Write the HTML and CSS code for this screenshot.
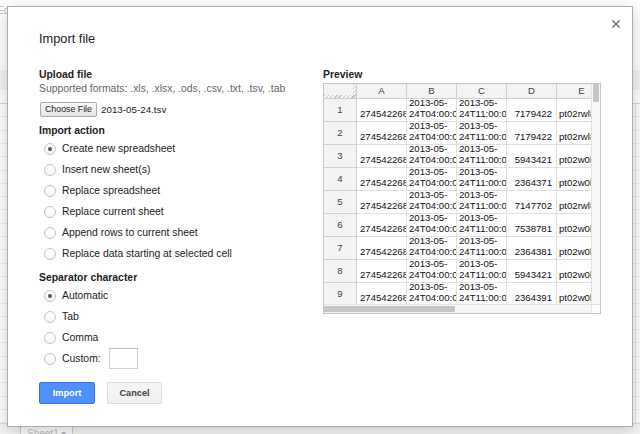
FILE: index.html
```html
<!DOCTYPE html>
<html lang="en">
<head>
    <meta charset="UTF-8"/>
    <meta content="width=device-width, initial-scale=1.0" name="viewport"/>
    <title>Import file</title>
    <link rel="stylesheet" href="styles.css">
</head>
<body>
    <div class="page">
        <!-- faded spreadsheet behind the modal -->
        <div class="sheet-menu">Edit</div>
        <div class="sheet-toolbar"></div>
        <div class="sheet-formula"></div>
        <div class="sheet-head"></div>
        <div class="sheet-grid"></div>
        <div class="sheet-tabs"><span class="sheet-tab">Sheet1 &#9662;</span></div>

        <div class="dialog">
            <button class="dialog-close" title="Close">
                <svg width="8" height="8" viewBox="0 0 8 8">
                    <path d="M0.5 0.5 L7.5 7.5 M7.5 0.5 L0.5 7.5" stroke="#7a7a7a" stroke-width="1.5" fill="none"/>
                </svg>
            </button>
            <h1 class="dialog-title">Import file</h1>

            <div class="dialog-body">
                <div class="col-left">
                    <div class="section-label">Upload file</div>
                    <div class="hint">Supported formats: .xls, .xlsx, .ods, .csv, .txt, .tsv, .tab</div>
                    <div class="file-row">
                        <span class="file-btn">Choose File</span>
                        <span class="file-name">2013-05-24.tsv</span>
                    </div>

                    <div class="section-label action-label">Import action</div>
                    <div class="radio-list">
                        <label class="radio-row"><span class="radio checked"></span>Create new spreadsheet</label>
                        <label class="radio-row"><span class="radio"></span>Insert new sheet(s)</label>
                        <label class="radio-row"><span class="radio"></span>Replace spreadsheet</label>
                        <label class="radio-row"><span class="radio"></span>Replace current sheet</label>
                        <label class="radio-row"><span class="radio"></span>Append rows to current sheet</label>
                        <label class="radio-row"><span class="radio"></span>Replace data starting at selected cell</label>
                    </div>

                    <div class="section-label sep-label">Separator character</div>
                    <div class="radio-list">
                        <label class="radio-row"><span class="radio checked"></span>Automatic</label>
                        <label class="radio-row"><span class="radio"></span>Tab</label>
                        <label class="radio-row"><span class="radio"></span>Comma</label>
                        <label class="radio-row"><span class="radio"></span>Custom:<span class="custom-input"></span></label>
                    </div>

                    <div class="buttons">
                        <button class="btn btn-primary">Import</button>
                        <button class="btn btn-cancel">Cancel</button>
                    </div>
                </div>

                <div class="col-right">
                    <div class="section-label">Preview</div>
                    <div class="preview">
                        <div class="preview-scroll">
                            <div class="sheet">
                                <div class="cell hd corner"></div>
                                <div class="cell hd">A</div>
                                <div class="cell hd">B</div>
                                <div class="cell hd">C</div>
                                <div class="cell hd">D</div>
                                <div class="cell hd">E</div>

                                <div class="cell hd">1</div>
                                <div class="cell ca"><span>2745422681</span></div>
                                <div class="cell"><span>2013-05-</span><span>24T04:00:00</span></div>
                                <div class="cell"><span>2013-05-</span><span>24T11:00:00</span></div>
                                <div class="cell cd"><span>7179422</span></div>
                                <div class="cell"><span>pt02rwl8</span></div>

                                <div class="cell hd">2</div>
                                <div class="cell ca"><span>2745422681</span></div>
                                <div class="cell"><span>2013-05-</span><span>24T04:00:00</span></div>
                                <div class="cell"><span>2013-05-</span><span>24T11:00:00</span></div>
                                <div class="cell cd"><span>7179422</span></div>
                                <div class="cell"><span>pt02rwl8</span></div>

                                <div class="cell hd">3</div>
                                <div class="cell ca"><span>2745422681</span></div>
                                <div class="cell"><span>2013-05-</span><span>24T04:00:00</span></div>
                                <div class="cell"><span>2013-05-</span><span>24T11:00:00</span></div>
                                <div class="cell cd"><span>5943421</span></div>
                                <div class="cell"><span>pt02w0l1</span></div>

                                <div class="cell hd">4</div>
                                <div class="cell ca"><span>2745422681</span></div>
                                <div class="cell"><span>2013-05-</span><span>24T04:00:00</span></div>
                                <div class="cell"><span>2013-05-</span><span>24T11:00:00</span></div>
                                <div class="cell cd"><span>2364371</span></div>
                                <div class="cell"><span>pt02w0l1</span></div>

                                <div class="cell hd">5</div>
                                <div class="cell ca"><span>2745422681</span></div>
                                <div class="cell"><span>2013-05-</span><span>24T04:00:00</span></div>
                                <div class="cell"><span>2013-05-</span><span>24T11:00:00</span></div>
                                <div class="cell cd"><span>7147702</span></div>
                                <div class="cell"><span>pt02rwl8</span></div>

                                <div class="cell hd">6</div>
                                <div class="cell ca"><span>2745422681</span></div>
                                <div class="cell"><span>2013-05-</span><span>24T04:00:00</span></div>
                                <div class="cell"><span>2013-05-</span><span>24T11:00:00</span></div>
                                <div class="cell cd"><span>7538781</span></div>
                                <div class="cell"><span>pt02w0l1</span></div>

                                <div class="cell hd">7</div>
                                <div class="cell ca"><span>2745422681</span></div>
                                <div class="cell"><span>2013-05-</span><span>24T04:00:00</span></div>
                                <div class="cell"><span>2013-05-</span><span>24T11:00:00</span></div>
                                <div class="cell cd"><span>2364381</span></div>
                                <div class="cell"><span>pt02w0l1</span></div>

                                <div class="cell hd">8</div>
                                <div class="cell ca"><span>2745422681</span></div>
                                <div class="cell"><span>2013-05-</span><span>24T04:00:00</span></div>
                                <div class="cell"><span>2013-05-</span><span>24T11:00:00</span></div>
                                <div class="cell cd"><span>5943421</span></div>
                                <div class="cell"><span>pt02w0l1</span></div>

                                <div class="cell hd">9</div>
                                <div class="cell ca"><span>2745422681</span></div>
                                <div class="cell"><span>2013-05-</span><span>24T04:00:00</span></div>
                                <div class="cell"><span>2013-05-</span><span>24T11:00:00</span></div>
                                <div class="cell cd"><span>2364391</span></div>
                                <div class="cell"><span>pt02w0l1</span></div>
                            </div>
                        </div>
                        <div class="vscroll"><div class="vthumb"></div></div>
                        <div class="hscroll"><div class="hthumb"></div></div>
                        <div class="scroll-corner"></div>
                    </div>
                </div>
            </div>
        </div>
    </div>
</body>
</html>
```

FILE: styles.css
```css
body {
    margin: 0;
    background: #fff;
    font-family: "Liberation Sans", Arial, sans-serif;
    color: #222;
}
.page {
    position: relative;
    width: 640px;
    height: 434px;
    overflow: hidden;
    display: flex;
    flex-direction: column;
}

/* spreadsheet behind the modal */
.sheet-menu {
    height: 22px;
    line-height: 22px;
    font-size: 10px;
    color: #b8b8b8;
    text-indent: -3px;
}
.sheet-toolbar {
    height: 48px;
}
.sheet-formula {
    height: 20px;
    background: #f3f3f3;
}
.sheet-head {
    height: 13px;
    border-bottom: 1px solid #dadada;
}
.sheet-grid {
    flex: 1;
    background-image:
        linear-gradient(to right, transparent 635px, #e6e6e6 635px, #e6e6e6 636px, transparent 636px),
        repeating-linear-gradient(to bottom, transparent 0, transparent 12.3px, #eeeeee 12.3px, #eeeeee 13.3px);
}
.sheet-tabs {
    height: 10px;
    background: #f5f5f5;
    border-top: 1px solid #e0e0e0;
    display: flex;
    padding-left: 20px;
}
.sheet-tab {
    border-left: 1px solid #d0d0d0;
    border-right: 1px solid #d0d0d0;
    padding: 4px 6px 0;
    font-size: 10px;
    line-height: 12px;
    color: #bdbdbd;
    background: #fff;
}

/* dialog */
.dialog {
    position: absolute;
    left: 7px;
    top: 6px;
    width: 626px;
    height: 421px;
    box-sizing: border-box;
    padding: 23px 31px 0;
    background: #fff;
    border: 1px solid #acacac;
    box-shadow: 0 4px 16px rgba(0, 0, 0, 0.2);
}
.dialog-close {
    position: absolute;
    top: 13px;
    right: 12px;
    width: 8px;
    height: 8px;
    padding: 0;
    border: none;
    background: none;
    display: flex;
}
.dialog-title {
    margin: 0;
    font-size: 12.8px;
    font-weight: normal;
    line-height: 17px;
    color: #222;
}
.dialog-body {
    display: flex;
    margin-top: 21px;
}
.col-left {
    width: 284px;
}
.col-right {
    width: 278px;
}
.section-label {
    font-size: 10.4px;
    font-weight: bold;
    line-height: 14px;
    color: #222;
}
.hint {
    font-size: 10.4px;
    line-height: 14px;
    color: #666;
}
.file-row {
    display: flex;
    align-items: center;
    height: 15px;
    margin-top: 6px;
}
.file-btn {
    width: 57px;
    height: 15px;
    margin-left: 1px;
    box-sizing: border-box;
    border: 1px solid #ababab;
    border-radius: 2px;
    background: linear-gradient(#fdfdfd, #e4e4e4);
    font-size: 8.8px;
    line-height: 13px;
    text-align: center;
    color: #222;
}
.file-name {
    margin-left: 4px;
    font-size: 9.8px;
    color: #222;
}
.action-label,
.sep-label {
    margin-top: 7px;
}
.radio-list {
    display: flex;
    flex-direction: column;
}
.radio-row {
    display: flex;
    align-items: center;
    height: 21px;
    font-size: 10.4px;
    color: #222;
}
.radio {
    position: relative;
    flex: none;
    width: 12px;
    height: 12px;
    box-sizing: border-box;
    margin: 0 6px 0 5px;
    border: 1px solid #c4c4c4;
    border-radius: 50%;
    background: linear-gradient(#fff, #f6f6f6);
}
.radio.checked::after {
    content: "";
    position: absolute;
    left: 3px;
    top: 3px;
    width: 4px;
    height: 4px;
    border-radius: 50%;
    background: #555;
}
.custom-input {
    width: 29px;
    height: 21px;
    box-sizing: border-box;
    margin-left: 8px;
    border: 1px solid #d2d2d2;
    border-top-color: #bfbfbf;
    background: #fff;
}
.buttons {
    display: flex;
    gap: 12px;
    margin-top: 13px;
}
.btn {
    height: 22px;
    padding: 0;
    box-sizing: border-box;
    border-radius: 2px;
    font-family: "Liberation Sans", Arial, sans-serif;
    font-size: 9.2px;
    font-weight: bold;
}
.btn-primary {
    width: 56px;
    background: #4d90fe;
    border: 1px solid #3079ed;
    color: #fff;
}
.btn-cancel {
    width: 55px;
    background: linear-gradient(#f5f5f5, #f1f1f1);
    border: 1px solid #dcdcdc;
    color: #444;
}

/* preview grid */
.preview {
    margin-top: 1px;
    width: 278px;
    height: 231px;
    box-sizing: border-box;
    border: 1px solid #c4c4c4;
    display: grid;
    grid-template-columns: 1fr 9px;
    grid-template-rows: 1fr 9px;
}
.preview-scroll {
    overflow: hidden;
}
.sheet {
    display: grid;
    grid-template-columns: 33px repeat(5, 50px);
    grid-template-rows: 15px repeat(9, 23px);
    width: 283px;
    font-size: 9.6px;
}
.cell {
    box-sizing: border-box;
    display: flex;
    flex-direction: column;
    justify-content: flex-end;
    padding: 0 2px 1.5px;
    overflow: hidden;
    white-space: nowrap;
    line-height: 11.5px;
    border-right: 1px solid #e0e0e0;
    border-bottom: 1px solid #e0e0e0;
    color: #111;
}
.cell.hd {
    justify-content: center;
    align-items: center;
    padding: 0;
    background: #f3f3f3;
    border-color: #d0d0d0;
    color: #444;
}
.cell.corner {
    background:
        repeating-linear-gradient(135deg, #c4c4c4 0, #c4c4c4 1px, transparent 1px, transparent 3px) left bottom / 100% 3px no-repeat,
        repeating-linear-gradient(135deg, #c4c4c4 0, #c4c4c4 1px, transparent 1px, transparent 3px) right top / 3px 100% no-repeat,
        #f3f3f3;
}
.cell.ca {
    padding-left: 3px;
}
.cell.cd {
    align-items: flex-end;
    padding-right: 4px;
}
.vscroll {
    box-sizing: border-box;
    border-left: 1px solid #e4e4e4;
    background: #f7f7f7;
}
.vthumb {
    height: 18px;
    margin: 0 1px;
    border-radius: 1px;
    background: #c6c6c6;
}
.hscroll {
    box-sizing: border-box;
    border-top: 1px solid #e4e4e4;
    background: #f7f7f7;
}
.hthumb {
    width: 131px;
    height: 6px;
    margin-top: 1px;
    border-radius: 1px;
    background: #c6c6c6;
}
.scroll-corner {
    box-sizing: border-box;
    border-left: 1px solid #e4e4e4;
    border-top: 1px solid #e4e4e4;
    background: #fff;
}
```
